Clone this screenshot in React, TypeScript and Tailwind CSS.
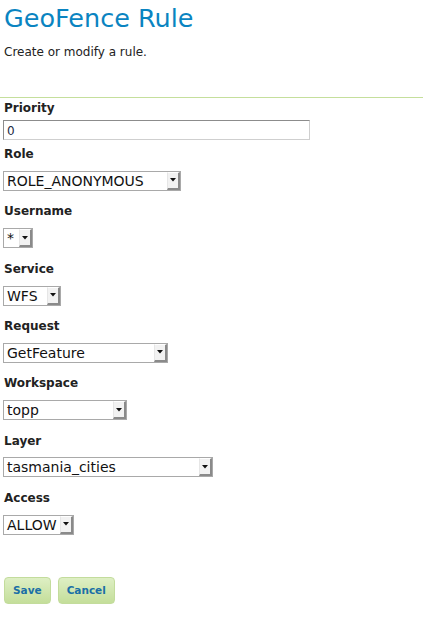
import React from "react";

function Sel({ w, value }: { w: string; value: string }) {
  return (
    <div className={`flex h-[20px] border border-[#a9a9a9] bg-white ${w}`}>
      <span className="flex-1 overflow-hidden whitespace-nowrap pl-[3px] text-[14px] leading-[18px] text-[#111]">
        {value}
      </span>
      <span className="flex w-[13px] items-center justify-center border-l border-t border-l-[#e6e6e6] border-t-[#ffffff] border-r-2 border-b-2 border-r-[#8a8a8a] border-b-[#8a8a8a] bg-[#f2f2f2]">
        <svg width="6" height="4" viewBox="0 0 6 4">
          <polygon points="0,0 6,0 3,3.5" fill="#111" />
        </svg>
      </span>
    </div>
  );
}

function Label({ children }: { children: React.ReactNode }) {
  return (
    <div className="h-[16px] pl-[1px] text-[12px] font-bold leading-[16px] text-[#222]">
      {children}
    </div>
  );
}

export default function App() {
  return (
    <div className="h-[621px] w-[423px] bg-white font-['DejaVu_Sans',sans-serif]">
      <div className="px-[4px]">
        <h1 className="pt-[3px] text-[25.5px] font-normal leading-[30px] text-[#0a84c1]">GeoFence Rule</h1>
        <p className="mt-[11px] text-[12px] leading-[16px] text-[#222]">Create or modify a rule.</p>
      </div>
      <div className="mt-[37px] h-[1px] w-full bg-[#c5df9c]" />
      <div className="pl-[3px]">
        <div className="mt-[2px]">
          <Label>Priority</Label>
        </div>
        <div className="mt-[4px] flex h-[20px] w-[307px] items-center border border-t-[#8c8c8c] border-l-[#8c8c8c] border-r-[#cfcfcf] border-b-[#cfcfcf] bg-white pl-[3px] pt-[1px] text-[12px] text-[#1c2a44]">
          0
        </div>
        <div className="mt-[6.2px]">
          <Label>Role</Label>
        </div>
        <div className="mt-[8.8px]">
          <Sel w="w-[178px]" value="ROLE_ANONYMOUS" />
        </div>
        <div className="mt-[12.5px]">
          <Label>Username</Label>
        </div>
        <div className="mt-[8.8px]">
          <Sel w="w-[30px]" value="*" />
        </div>
        <div className="mt-[12.5px]">
          <Label>Service</Label>
        </div>
        <div className="mt-[8.8px]">
          <Sel w="w-[58px]" value="WFS" />
        </div>
        <div className="mt-[12.5px]">
          <Label>Request</Label>
        </div>
        <div className="mt-[8.8px]">
          <Sel w="w-[165px]" value="GetFeature" />
        </div>
        <div className="mt-[12.5px]">
          <Label>Workspace</Label>
        </div>
        <div className="mt-[8.8px]">
          <Sel w="w-[124px]" value="topp" />
        </div>
        <div className="mt-[12.5px]">
          <Label>Layer</Label>
        </div>
        <div className="mt-[8.8px]">
          <Sel w="w-[210px]" value="tasmania_cities" />
        </div>
        <div className="mt-[12.5px]">
          <Label>Access</Label>
        </div>
        <div className="mt-[8.8px]">
          <Sel w="w-[71px]" value="ALLOW" />
        </div>
        <div className="mt-[42px] flex gap-[7px] pl-[1px]">
          <button className="h-[27px] rounded-[4px] border border-[#c3dc9c] bg-gradient-to-b from-[#deefc4] to-[#c4de9a] px-[8px] pt-[1px] text-[10.5px] font-bold text-[#1b6fa6]">
            Save
          </button>
          <button className="h-[27px] rounded-[4px] border border-[#c3dc9c] bg-gradient-to-b from-[#deefc4] to-[#c4de9a] px-[8px] pt-[1px] text-[10.5px] font-bold text-[#1b6fa6]">
            Cancel
          </button>
        </div>
      </div>
    </div>
  );
}
